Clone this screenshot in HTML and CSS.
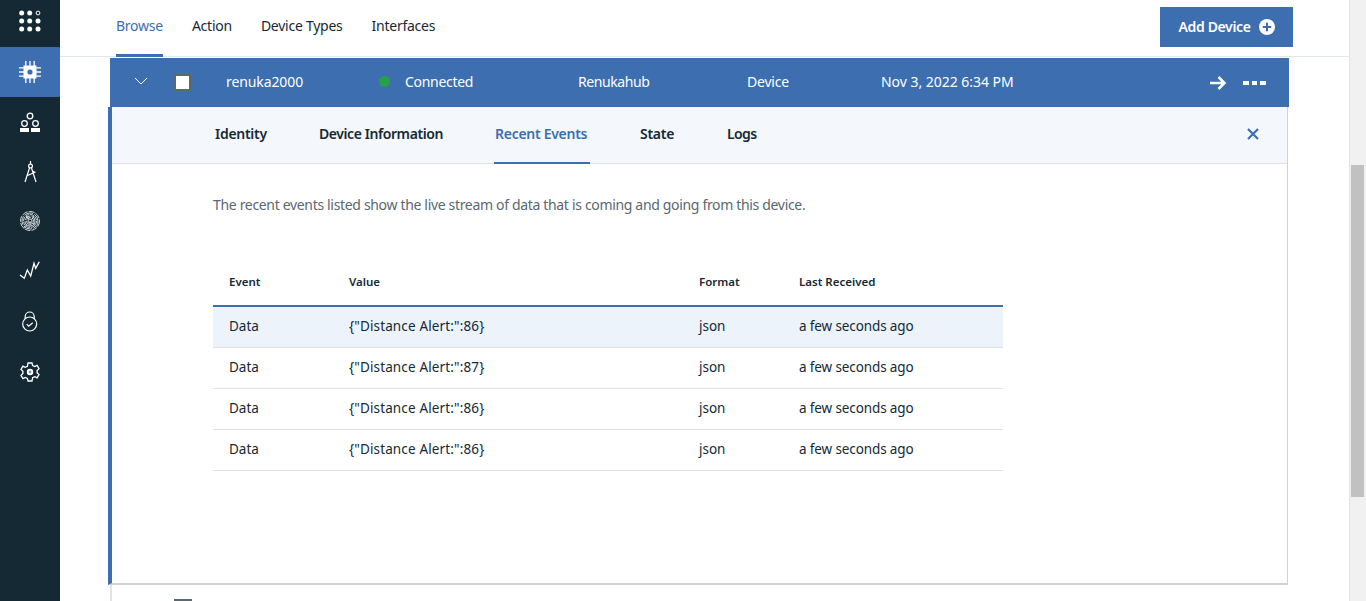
FILE: index.html
```html
<!DOCTYPE html>
<html lang="en">
<head>
<meta charset="utf-8">
<title>Browse devices</title>
<link rel="stylesheet" href="styles.css">
</head>
<body>
<div class="app">
  <nav class="sidenav">
    <a class="nav-item nav-grid">
      <svg width="24" height="24" viewBox="0 0 24 24" fill="#fff"><circle cx="3.700" cy="4" r="2.500"/><circle cx="11.700" cy="4" r="2.500"/><circle cx="20" cy="4" r="1.900" fill="none" stroke="#fff" stroke-width="1"/><circle cx="3.700" cy="12" r="2.500"/><circle cx="11.700" cy="12" r="2.500"/><circle cx="20" cy="12" r="2.500"/><circle cx="3.700" cy="20" r="2.500"/><circle cx="11.700" cy="20" r="2.500"/><circle cx="20" cy="20" r="2.500"/></svg>
    </a>
    <a class="nav-item nav-active">
      <svg width="22" height="22" viewBox="0 0 22 22" fill="none" stroke="#fff" stroke-width="1.300"><rect x="4.500" y="4.500" width="13" height="13" fill="#fff" stroke="none"/><circle cx="11" cy="11" r="2.600" fill="#3c6eb0" stroke="none"/><path d="M6.800 0v5M11 0v5M15.200 0v5M6.800 17v5M11 17v5M15.200 17v5M0 6.800h5M0 11h5M0 15.200h5M17 6.800h5M17 11h5M17 15.200h5"/></svg>
    </a>
    <a class="nav-item">
      <svg width="22" height="22" viewBox="0 0 22 22" fill="none" stroke="#fff" stroke-width="1.300"><circle cx="11" cy="5" r="2.800"/><circle cx="5.500" cy="12.500" r="2.800"/><circle cx="16.500" cy="12.500" r="2.800"/><rect x="1" y="17" width="9" height="4" fill="#fff" stroke="none"/><rect x="12" y="17" width="9" height="4" fill="#fff" stroke="none"/></svg>
    </a>
    <a class="nav-item">
      <svg width="22" height="24" viewBox="0 0 22 24" fill="none" stroke="#fff" stroke-width="1.200"><circle cx="11.500" cy="6" r="1.900"/><path d="M11.500 1v3M10.500 8 6 22M12.500 8 17 22M8.500 15.500l8-3.500M15 11l-1 3"/></svg>
    </a>
    <a class="nav-item nav-shift">
      <svg width="22" height="22" viewBox="0 0 22 22" fill="none" stroke="#e3e7e9" stroke-width="0.900"><circle cx="11" cy="11" r="9.500" stroke-dasharray="6 1.200"/><circle cx="11" cy="11" r="8" stroke-dasharray="9 1.500"/><circle cx="11" cy="11" r="6.500" stroke-dasharray="4 1"/><circle cx="11" cy="11" r="5" stroke-dasharray="7 1.200"/><circle cx="11" cy="11" r="3.500" stroke-dasharray="5 1"/><circle cx="11" cy="11" r="2"/><path d="M11 11v6M8 14c-1 2-2 3-3.500 4M14 13c1 2 2 3 3 4M7 6l3 3M15 6l-2 3"/></svg>
    </a>
    <a class="nav-item">
      <svg width="22" height="22" viewBox="0 0 22 22" fill="none" stroke="#fff" stroke-width="1.300"><path d="M1 14l4.300 3.300 3-8.300 3.400 6L15 2.300l1.700 5 3.600-6.600"/></svg>
    </a>
    <a class="nav-item">
      <svg width="18" height="24" viewBox="0 0 18 24" fill="none" stroke="#fff" stroke-width="1.200"><circle cx="8.700" cy="14" r="7"/><path d="M4.200 9V6.500a4.500 4.500 0 0 1 9 0V9M5.700 14.200l2 2 4-3.500"/></svg>
    </a>
    <a class="nav-item">
      <svg width="20" height="20" viewBox="0 0 20 20" fill="none" stroke="#fff" stroke-width="1.300"><path d="M8 1h4l.6 2.500 2.200 1 2.300-1.200 1.900 3.400-1.900 1.800v2.200l1.900 1.800-1.900 3.400-2.300-1.200-2.200 1L12 19H8l-.6-2.500-2.200-1-2.300 1.200L1 13.300l1.900-1.800V9.300L1 7.500l1.900-3.400 2.300 1.200 2.200-1z"/><circle cx="10" cy="10" r="2.300" fill="#8a98a1" stroke-width="1.800"/></svg>
    </a>
  </nav>

  <main class="content">
    <header class="topbar">
      <div class="topnav">
        <a class="topnav-link topnav-current">Browse</a>
        <a class="topnav-link">Action</a>
        <a class="topnav-link">Device Types</a>
        <a class="topnav-link">Interfaces</a>
      </div>
      <button class="add-btn"><span class="add-label">Add Device</span>
        <svg width="16" height="16" viewBox="0 0 16 16"><circle cx="8" cy="8" r="8" fill="#fff"/><path d="M8 3.800v8.400M3.800 8h8.400" stroke="#3c6eb0" stroke-width="2"/></svg>
      </button>
    </header>

    <div class="device-row">
      <svg class="chev" width="14" height="8" viewBox="0 0 14 8" fill="none" stroke="#fff" stroke-width="1"><path d="M1 1l6 6 6-6"/></svg>
      <span class="check"></span>
      <span class="cell cell-name">renuka2000</span>
      <span class="dot"></span>
      <span class="cell cell-status">Connected</span>
      <span class="cell cell-hub">Renukahub</span>
      <span class="cell cell-type">Device</span>
      <span class="cell cell-date">Nov 3, 2022 6:34 PM</span>
      <svg class="arrow" width="16" height="14" viewBox="0 0 16 14" fill="none" stroke="#fff" stroke-width="2.600"><path d="M0 7h14M8.500 1l6 6-6 6"/></svg>
      <span class="more"><i></i><i></i><i></i></span>
    </div>

    <section class="panel">
      <div class="tabs">
        <a class="tab tab-identity">Identity</a>
        <a class="tab tab-info">Device Information</a>
        <a class="tab tab-events tab-current">Recent Events</a>
        <a class="tab tab-state">State</a>
        <a class="tab tab-logs">Logs</a>
        <svg class="close" width="12" height="12" viewBox="0 0 12 12" stroke="#3c6eb0" stroke-width="2.200"><path d="M1 1l10 10M11 1L1 11"/></svg>
      </div>
      <div class="panel-body">
        <p class="intro">The recent events listed show the live stream of data that is coming and going from this device.</p>
        <table class="events">
          <thead>
            <tr><th class="c1">Event</th><th class="c2">Value</th><th class="c3">Format</th><th class="c4">Last Received</th></tr>
          </thead>
          <tbody>
            <tr class="row-new"><td>Data</td><td class="val">{"Distance Alert:":86}</td><td>json</td><td class="ago">a few seconds ago</td></tr>
            <tr><td>Data</td><td class="val">{"Distance Alert:":87}</td><td>json</td><td class="ago">a few seconds ago</td></tr>
            <tr><td>Data</td><td class="val">{"Distance Alert:":86}</td><td>json</td><td class="ago">a few seconds ago</td></tr>
            <tr><td>Data</td><td class="val">{"Distance Alert:":86}</td><td>json</td><td class="ago">a few seconds ago</td></tr>
          </tbody>
        </table>
      </div>
    </section>

    <div class="next-row"><span class="next-check"></span></div>
  </main>

  <div class="scrollbar"><div class="thumb"></div></div>
</div>
</body>
</html>
```

FILE: styles.css
```css
* { box-sizing: border-box; }
html, body { margin: 0; height: 100%; overflow: hidden; background: #fff; }
body { font-family: "Noto Sans", "Liberation Sans", sans-serif; font-size: 14px; color: #152935; }
.app { display: flex; height: 601px; }

.sidenav { width: 60px; flex: none; background: #152935; display: flex; flex-direction: column; }
.nav-item { height: 50px; display: flex; align-items: center; justify-content: center; }
.nav-grid { height: 47px; padding-bottom: 5px; }
.nav-active { background: #3c6eb0; }
.nav-shift { padding-bottom: 2px; }

.content { flex: 1; min-width: 0; display: flex; flex-direction: column; }
.topbar { height: 57px; flex: none; display: flex; justify-content: space-between; border-bottom: 1px solid #dfe9e9; padding: 0 56px; }
.topnav { display: flex; gap: 29px; height: 57px; }
.topnav-link { height: 57px; line-height: 52px; font-size: 14px; letter-spacing: -0.25px; color: #152935; }
.topnav-current { color: #3c6eb0; border-bottom: 3px solid #3c6eb0; }
.add-btn { margin-top: 7px; width: 133px; height: 40px; border: 0; background: #3c6eb0; color: #fff; font: 600 14px "Noto Sans", sans-serif; letter-spacing: -0.35px; display: flex; align-items: center; justify-content: center; gap: 8px; padding: 0; }
.add-label { margin-top: -2px; }

.device-row { margin: 1px 0 0 50px; width: 1179px; height: 49px; flex: none; background: #3c6eb0; color: #fff; display: flex; align-items: center; position: relative; z-index: 1; }
.chev { margin: -3px 0 0 24px; flex: none; }
.check { margin: 0 0 0 26px; width: 17px; height: 17px; flex: none; background: #fff; border: 2px solid #5a6872; }
.cell { flex: none; font-size: 14px; letter-spacing: -0.2px; white-space: nowrap; margin-top: -2px; }
.cell-name { margin-left: 35px; width: 153px; letter-spacing: -0.1px; }
.dot { width: 11px; height: 11px; flex: none; margin-top: -3px; border-radius: 50%; background: #26a146; }
.cell-status { margin-left: 15px; width: 173px; letter-spacing: -0.3px; }
.cell-hub { width: 169px; letter-spacing: -0.42px; }
.cell-type { width: 134px; }
.cell-date { width: 329px; letter-spacing: -0.03px; }
.arrow { flex: none; }
.more { margin-left: 17px; display: flex; gap: 3px; }
.more i { width: 5.500px; height: 4px; background: #fff; }

.panel { margin: 0 0 0 48px; width: 1180px; height: 478px; flex: none; border-left: 4px solid #3c6eb0; border-right: 1px solid #d0d2d3; border-bottom: 2px solid #d0d2d3; }
.tabs { height: 57px; background: #f4f7fb; border-bottom: 1px solid #dfe3e6; display: flex; position: relative; padding-left: 102px; }
.tab { height: 57px; line-height: 54px; font-weight: 600; font-size: 14px; letter-spacing: -0.28px; color: #152935; white-space: nowrap; flex: none; }
.tab-identity { width: 104px; padding-left: 1px; }
.tab-info { width: 176px; padding-left: 1px; letter-spacing: -0.42px; }
.tab-events { width: 96px; margin-right: 50px; padding-left: 1px; color: #3c6eb0; }
.tab-current { border-bottom: 2px solid #3c6eb0; }
.tab-state { width: 87px; }
.tab-logs { width: 40px; letter-spacing: -0.6px; }
.close { position: absolute; right: 28px; top: 21px; }

.panel-body { padding: 32px 0 0 101px; }
.intro { margin: 0 0 44px; line-height: 18px; font-size: 14px; letter-spacing: -0.33px; color: #5a6872; }
.events { border-collapse: collapse; width: 790px; table-layout: fixed; }
.c1 { width: 120px; }
.c2 { width: 350px; }
.c3 { width: 100px; }
.c4 { width: 220px; }
.events th { height: 48px; padding: 0 0 1px 16px; text-align: left; font-size: 11.500px; font-weight: 600; color: #152935; border-bottom: 2px solid #3c6eb0; }
.events td { height: 41px; padding: 0 0 1px 16px; font-size: 13.500px; color: #152935; border-bottom: 1px solid #dfe3e6; white-space: nowrap; }
.events .val { letter-spacing: 0.14px; }
.events .ago { letter-spacing: -0.12px; }
.events .row-new td { background: #ecf3fb; }

.next-row { margin-left: 50px; width: 1179px; flex: 1; border-left: 2px solid #e4e4e4; position: relative; }
.next-check { position: absolute; left: 62px; top: 14px; width: 18px; height: 2px; background: #5a6872; }

.scrollbar { width: 17px; flex: none; background: #f1f1f1; border-left: 1px solid #e4e4e4; padding: 165px 0 0 1px; }
.thumb { width: 13px; height: 332px; background: #c1c1c1; }
```
